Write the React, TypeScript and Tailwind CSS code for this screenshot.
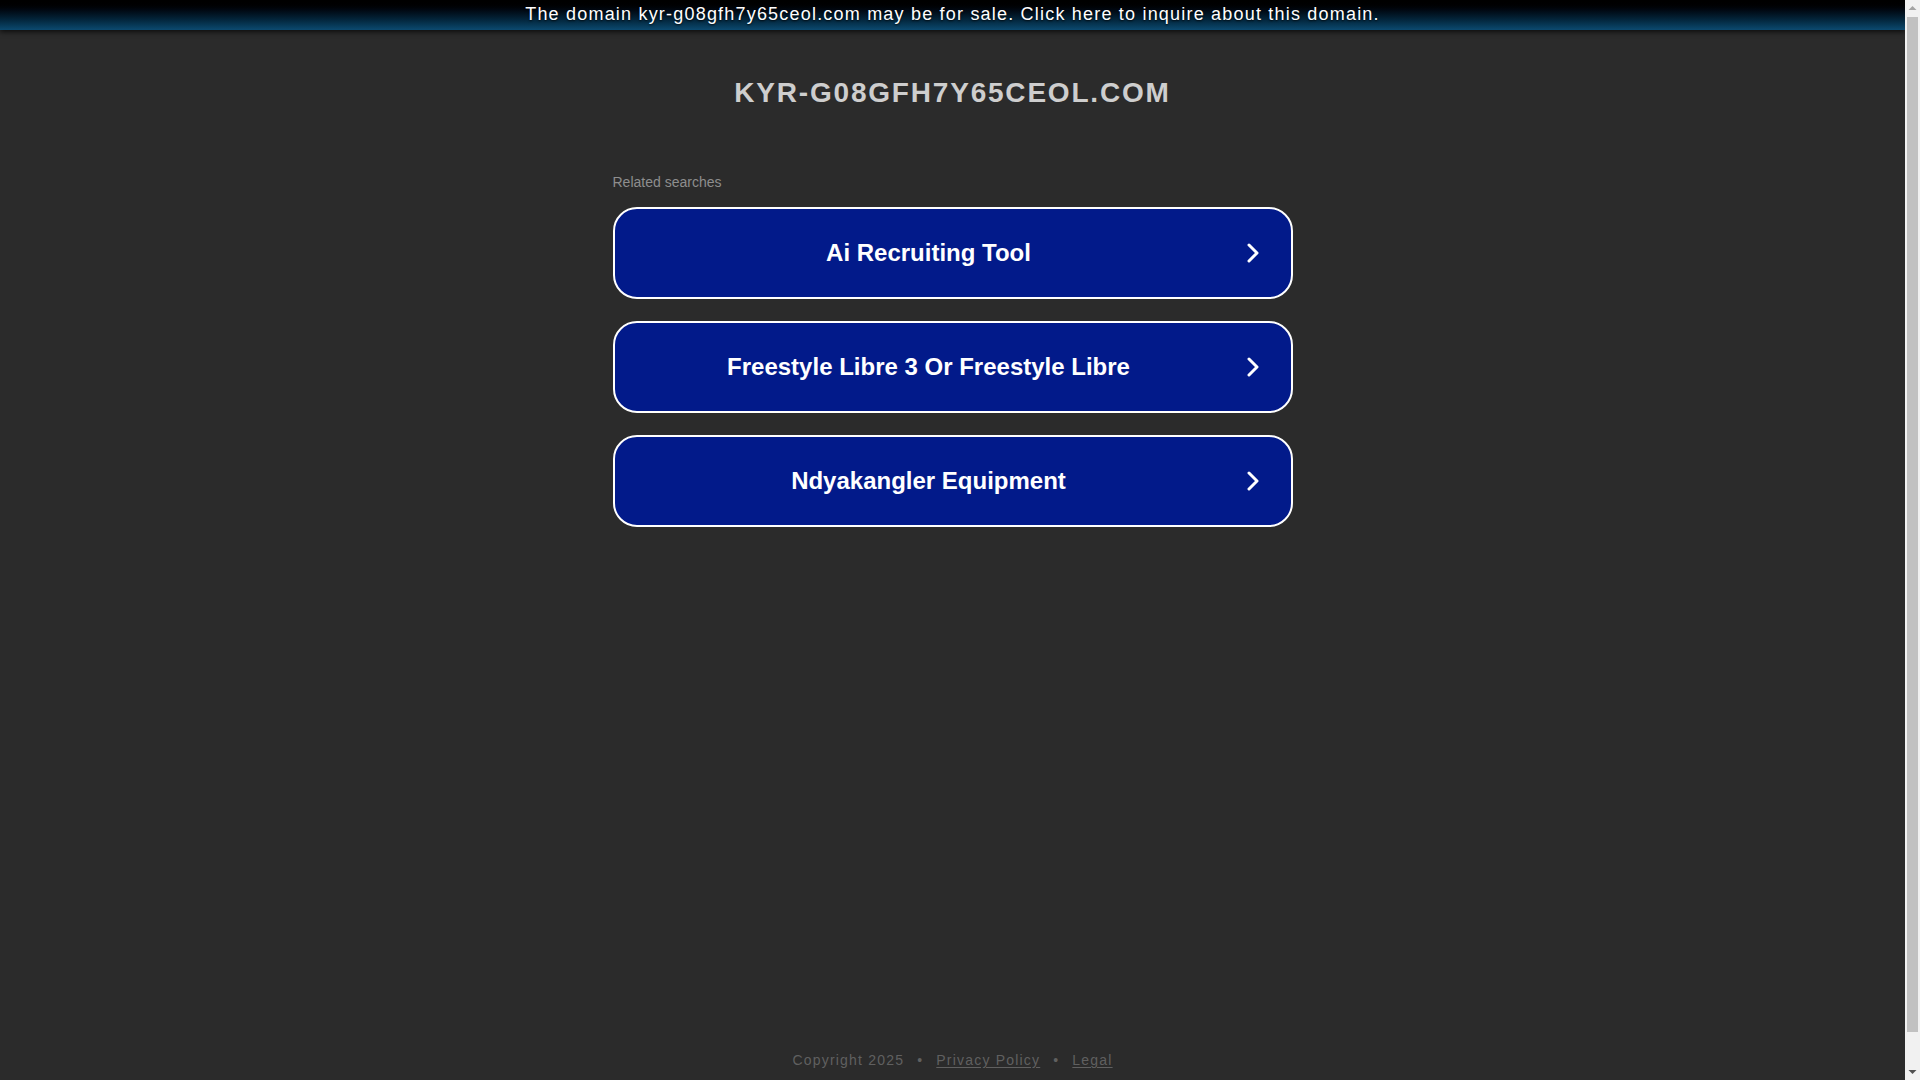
const searches = ['Ai Recruiting Tool', 'Freestyle Libre 3 Or Freestyle Libre', 'Ndyakangler Equipment'];

function Chevron() {
  return (
    <svg width="12" height="20" viewBox="0 0 12 20" className="shrink-0" fill="none">
      <polyline points="2,2 10,10 2,18" stroke="white" strokeWidth="3" strokeLinecap="round" strokeLinejoin="round" />
    </svg>
  );
}

// classic browser scrollbar seen at the right edge of the screenshot
function Scrollbar() {
  return (
    <div className="flex w-[15px] shrink-0 flex-col items-center bg-[#f1f1f1]">
      <svg width="15" height="17" viewBox="0 0 15 17">
        <polygon points="3.5,10 7.5,6 11.5,10" fill="#a3a3a3" />
      </svg>
      <div className="h-[1015px] w-[11px] bg-[#c1c1c1]" />
      <div className="flex-1" />
      <svg width="15" height="17" viewBox="0 0 15 17">
        <polygon points="3.5,7 7.5,11 11.5,7" fill="#505050" />
      </svg>
    </div>
  );
}

export default function App() {
  return (
    <div className="flex h-screen bg-[#2b2b2b]">
      <div className="flex-1 overflow-hidden">
        <div className="flex min-h-[1118px] flex-col font-['Liberation_Sans',Arial,sans-serif]">
          <a
            href="#"
            className="relative z-10 flex h-[30px] items-center justify-center bg-gradient-to-b from-black to-[#0c4a70] pb-[2px] text-[18px] tracking-[1.2px] text-white shadow-[0_2px_5px_rgba(0,0,0,0.7)] [text-shadow:0_1px_2px_rgba(0,0,0,0.8)]"
          >
            The domain kyr-g08gfh7y65ceol.com may be for sale. Click here to inquire about this domain.
          </a>

          <h1 className="mt-[46px] text-center text-[28px] font-bold leading-[34px] tracking-[1.8px] text-[#cecece]">
            KYR-G08GFH7Y65CEOL.COM
          </h1>

          <div className="mx-auto mt-[62px] w-[680px]">
            <div className="text-[14px] leading-[20px] text-[#8e8e8e]">Related searches</div>
            <div className="mt-[15px] flex flex-col gap-[22px]">
              {searches.map((s) => (
                <a
                  key={s}
                  href="#"
                  className="flex h-[92px] items-center rounded-[24px] border-2 border-white bg-[#021a8a] pr-[32px] text-white"
                >
                  <span className="flex-1 text-center text-[24px] font-bold">{s}</span>
                  <span className="ml-[4px] flex">
                    <Chevron />
                  </span>
                </a>
              ))}
            </div>
          </div>

          <footer className="mt-auto pb-[48px] text-center text-[14px] leading-[20px] tracking-[1.2px] text-[#606060]">
            <span>Copyright 2025</span>
            <span className="mx-[13px]">•</span>
            <a href="#" className="underline underline-offset-2">Privacy Policy</a>
            <span className="mx-[13px]">•</span>
            <a href="#" className="underline underline-offset-2">Legal</a>
          </footer>
        </div>
      </div>
      <Scrollbar />
    </div>
  );
}
